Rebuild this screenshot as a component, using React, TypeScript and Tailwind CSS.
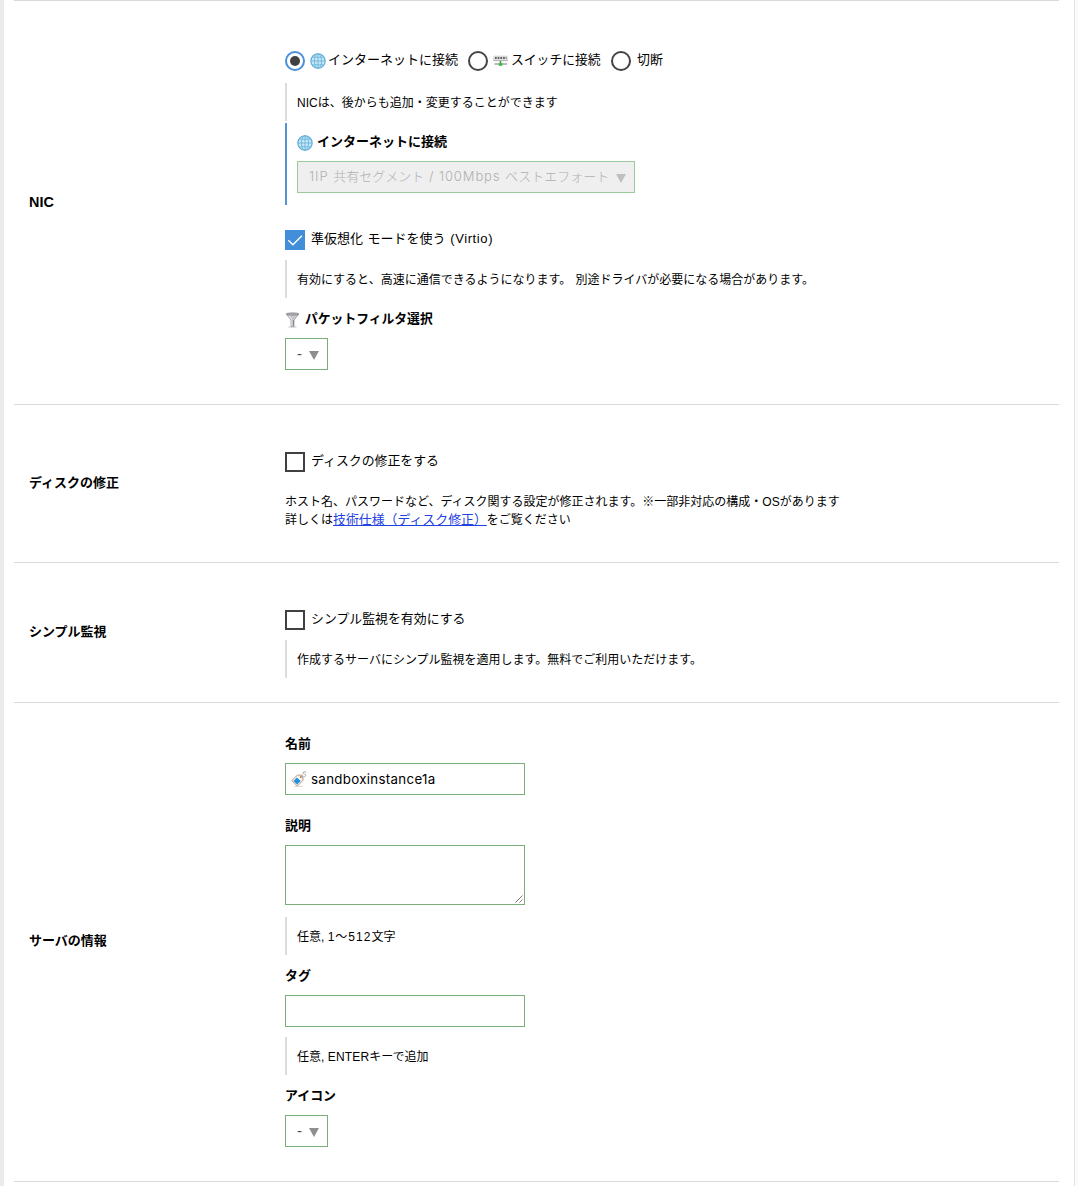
import React from 'react';

function GlobeIcon() {
  return (
    <svg width="16" height="16" viewBox="0 0 16 16" fill="none" className="shrink-0">
      <circle cx="8" cy="8" r="7.2" fill="#c5e6f6" stroke="#55a9d4" strokeWidth="1.1" />
      <ellipse cx="8" cy="8" rx="3.6" ry="7.2" stroke="#62b0d8" strokeWidth="0.8" />
      <path d="M8 1v14M1 8h14M2.2 4.2h11.6M2.2 11.8h11.6" stroke="#62b0d8" strokeWidth="0.8" />
    </svg>
  );
}

function SwitchIcon() {
  return (
    <svg width="16" height="16" viewBox="0 0 16 16" fill="none" className="shrink-0">
      <path d="M1 3h13l.7 4.6H.3z" fill="#dedede" stroke="#c4c4c4" strokeWidth="0.5" />
      <path d="M2 5h11.5" stroke="#3c3c3c" strokeWidth="1.5" strokeDasharray="1.7 1" />
      <path d="M.5 7.6h14" stroke="#aaa" strokeWidth="0.8" />
      <path d="M7.5 8v3" stroke="#2fa83a" strokeWidth="1.6" />
      <path d="M1.5 11h12.5" stroke="#777" strokeWidth="1" />
      <path d="M5.8 10.4h3.6v2.4H5.8z" fill="#35c043" />
    </svg>
  );
}

function FilterIcon() {
  return (
    <svg width="16" height="16" viewBox="0 0 16 16" fill="none" className="shrink-0">
      <path d="M1.2 2L6 8v6.6h3V8l4.8-6z" fill="#c8c8ce" stroke="#8b8b92" strokeWidth="0.7" />
      <path d="M4 4l3 3.8V14" stroke="#f4f4f8" strokeWidth="0.9" />
      <path d="M8.3 8v6.5" stroke="#6f6f78" strokeWidth="0.8" />
      <ellipse cx="7.5" cy="2" rx="6.4" ry="1.2" fill="#aaaaae" stroke="#858588" strokeWidth="0.6" />
      <path d="M3.5 15h8" stroke="#b5b5b5" strokeWidth="0.8" />
    </svg>
  );
}

function TagIcon() {
  return (
    <svg width="16" height="16" viewBox="0 0 16 16" fill="none" className="shrink-0">
      <path d="M3 15.4h9" stroke="#e2ddd8" strokeWidth="1.2" />
      <path d="M.7 9.6L6.4 4.1l4.9.1.9 4.9L6.4 15z" fill="#f8f4ef" stroke="#bd9982" strokeWidth="1" />
      <path d="M5.9 6.5l3.8 3.6-3.6 3.4-3.6-3.4z" fill="#2492dc" />
      <circle cx="9.8" cy="6" r="0.9" fill="#9b8375" />
      <path d="M9.8 6c2.6.5 5.2-.2 5-1.9-.2-1.4-3.2-.8-3-2.2.1-1 1.9-1.5 3.4-.9" stroke="#aaa09a" strokeWidth="0.9" />
    </svg>
  );
}

function Radio({ checked }: { checked?: boolean }) {
  return (
    <span
      className={
        checked
          ? 'flex size-5 shrink-0 items-center justify-center rounded-full border-2 border-[#4a8fd8]'
          : 'flex size-5 shrink-0 rounded-full border-2 border-[#444]'
      }
    >
      {checked && <span className="size-2.5 rounded-full bg-[#404040]" />}
    </span>
  );
}

function Checkbox({ checked, children }: { checked?: boolean; children: React.ReactNode }) {
  return (
    <label className="flex h-5 items-center">
      {checked ? (
        <span className="flex size-5 items-center justify-center bg-[#428ed8]">
          <svg width="20" height="20" viewBox="0 0 20 20" fill="none">
            <path d="M3.3 10.2l4.6 4.5 9-8.9" stroke="#fff" strokeWidth="1.4" />
          </svg>
        </span>
      ) : (
        <span className="size-5 border-2 border-[#404040]" />
      )}
      <span className="ml-1.5 -mt-0.5">{children}</span>
    </label>
  );
}

function Hint({ children, className = '' }: { children: React.ReactNode; className?: string }) {
  return (
    <p className={`flex h-[38px] items-center border-l-2 border-[#dcdcdc] pt-0.5 pl-2.5 text-xs ${className}`}>
      <span>{children}</span>
    </p>
  );
}

function Heading({ children, className = '' }: { children: React.ReactNode; className?: string }) {
  return <h3 className={`flex h-5 items-center font-bold ${className}`}>{children}</h3>;
}

function Arrow({ color }: { color: string }) {
  return (
    <svg width="10" height="9" viewBox="0 0 10 9" className="shrink-0">
      <path d="M0 0h10L5 9z" fill={color} />
    </svg>
  );
}

function EmptySelect({ className = '' }: { className?: string }) {
  return (
    <div className={`flex h-8 w-[43px] items-center border border-[#7aae78] pl-[11px] text-[#444] ${className}`}>
      <span className="w-[11.5px] text-[15px]">-</span>
      <span className="mt-0.5">
        <Arrow color="#8e8e8e" />
      </span>
    </div>
  );
}

interface SectionProps {
  title: string;
  className: string;
  titleClass?: string;
  children: React.ReactNode;
}

function Section({ title, className, titleClass = 'text-[13px]', children }: SectionProps) {
  return (
    <section className={`flex border-t border-[#dadada] pl-[15px] ${className}`}>
      <h2 className={`flex w-64 shrink-0 items-center pb-0.5 font-bold ${titleClass}`}>{title}</h2>
      <div className="flex-1">{children}</div>
    </section>
  );
}

export default function App() {
  return (
    <div className="h-[1186px] w-[1078px] overflow-hidden border-l-4 border-[#ebebeb] bg-[#fafafa] font-['Liberation_Sans','Noto_Sans_CJK_JP',sans-serif] text-[12.9px] leading-5 text-black">
      <main className="h-full w-[1071px] border-r border-[#e2e2e2] bg-white pr-[15px] pl-2.5">
        <Section title="NIC" className="h-[404px]" titleClass="text-[14.4px]">
          <div className="mt-[50px] flex h-5 items-center">
            <Radio checked />
            <span className="ml-[5px]"><GlobeIcon /></span>
            <span className="-mt-0.5 ml-0.5 w-[140px] text-[13px]">インターネットに接続</span>
            <Radio />
            <span className="ml-[5px]"><SwitchIcon /></span>
            <span className="-mt-0.5 ml-0.5 w-[100px] text-[12.8px]">スイッチに接続</span>
            <Radio />
            <span className="-mt-0.5 ml-1.5">切断</span>
          </div>
          <Hint className="mt-3">NICは、後からも追加・変更することができます</Hint>
          <div className="mt-0.5 h-[82px] border-l-2 border-[#5a91d0] pt-[9px] pl-2.5">
            <Heading>
              <span className="mt-0.5 mr-1"><GlobeIcon /></span>
              <span className="text-[13px]">インターネットに接続</span>
            </Heading>
            <div className="mt-[9px] flex h-8 w-[338px] items-center border border-[#9bcb9a] bg-[#efefef] pl-[11px] text-[13px] text-[#b0b0b0]">
              <span className="-mt-0.5 w-[307px] font-['Inter','Noto_Sans_CJK_JP',sans-serif] font-light whitespace-nowrap">
                <span className="tracking-[1px]">1IP </span>共有セグメント
                <span className="tracking-[0.9px]"> / 100Mbps </span>ベストエフォート
              </span>
              <span className="mt-0.5"><Arrow color="#c0c0c0" /></span>
            </div>
          </div>
          <div className="mt-[25px]">
            <Checkbox checked>
              <span className="text-[13px] [word-spacing:1px]">
                準仮想化 モードを使う <span className="tracking-[0.6px]">(Virtio)</span>
              </span>
            </Checkbox>
          </div>
          <Hint className="mt-2.5 [word-spacing:1px]">有効にすると、高速に通信できるようになります。 別途ドライバが必要になる場合があります。</Hint>
          <Heading className="mt-[11px]">
            <span className="mt-0.5 mr-1"><FilterIcon /></span>
            <span className="text-[12.8px]">パケットフィルタ選択</span>
          </Heading>
          <EmptySelect className="mt-[9px]" />
        </Section>

        <Section title="ディスクの修正" className="h-[158px]">
          <div className="mt-[47px]">
            <Checkbox>ディスクの修正をする</Checkbox>
          </div>
          <p className="mt-[21px] text-xs leading-[18px]">
            ホスト名、パスワードなど、ディスク関する設定が修正されます。※一部非対応の構成・OSがあります
            <br />
            詳しくは<a className="text-[12.9px] text-[#2340e0] underline">技術仕様（ディスク修正）</a>をご覧ください
          </p>
        </Section>

        <Section title="シンプル監視" className="h-[140px]">
          <div className="mt-[47px]">
            <Checkbox>シンプル監視を有効にする</Checkbox>
          </div>
          <Hint className="mt-2.5">作成するサーバにシンプル監視を適用します。無料でご利用いただけます。</Hint>
        </Section>

        <Section title="サーバの情報" className="h-[479px]">
          <Heading className="mt-[31px]">名前</Heading>
          <div className="mt-[9px] flex h-8 w-60 items-center border border-[#7aae78] pl-[5px]">
            <TagIcon />
            <span className="ml-1 font-['Inter','Noto_Sans_CJK_JP',sans-serif] text-[13.3px] tracking-[0.32px]">sandboxinstance1a</span>
          </div>
          <Heading className="mt-[21px]">説明</Heading>
          <div className="mt-[9px] flex h-[60px] w-60 items-end justify-end border border-[#7aae78] p-px">
            <svg width="8" height="8" viewBox="0 0 8 8" fill="none">
              <path d="M0.5 7.5l7-7M4.5 7.5l3-3" stroke="#555" strokeWidth="0.8" />
            </svg>
          </div>
          <Hint className="mt-3">任意, <span className="tracking-[1px]">1〜512</span>文字</Hint>
          <Heading className="mt-[11px]">タグ</Heading>
          <div className="mt-[9px] h-8 w-60 border border-[#7aae78]" />
          <Hint className="mt-2.5">任意, <span className="tracking-[0.2px]">ENTER</span>キーで追加</Hint>
          <Heading className="mt-[11px]">アイコン</Heading>
          <EmptySelect className="mt-[9px]" />
        </Section>
        <div className="border-t border-[#dadada]" />
      </main>
    </div>
  );
}
